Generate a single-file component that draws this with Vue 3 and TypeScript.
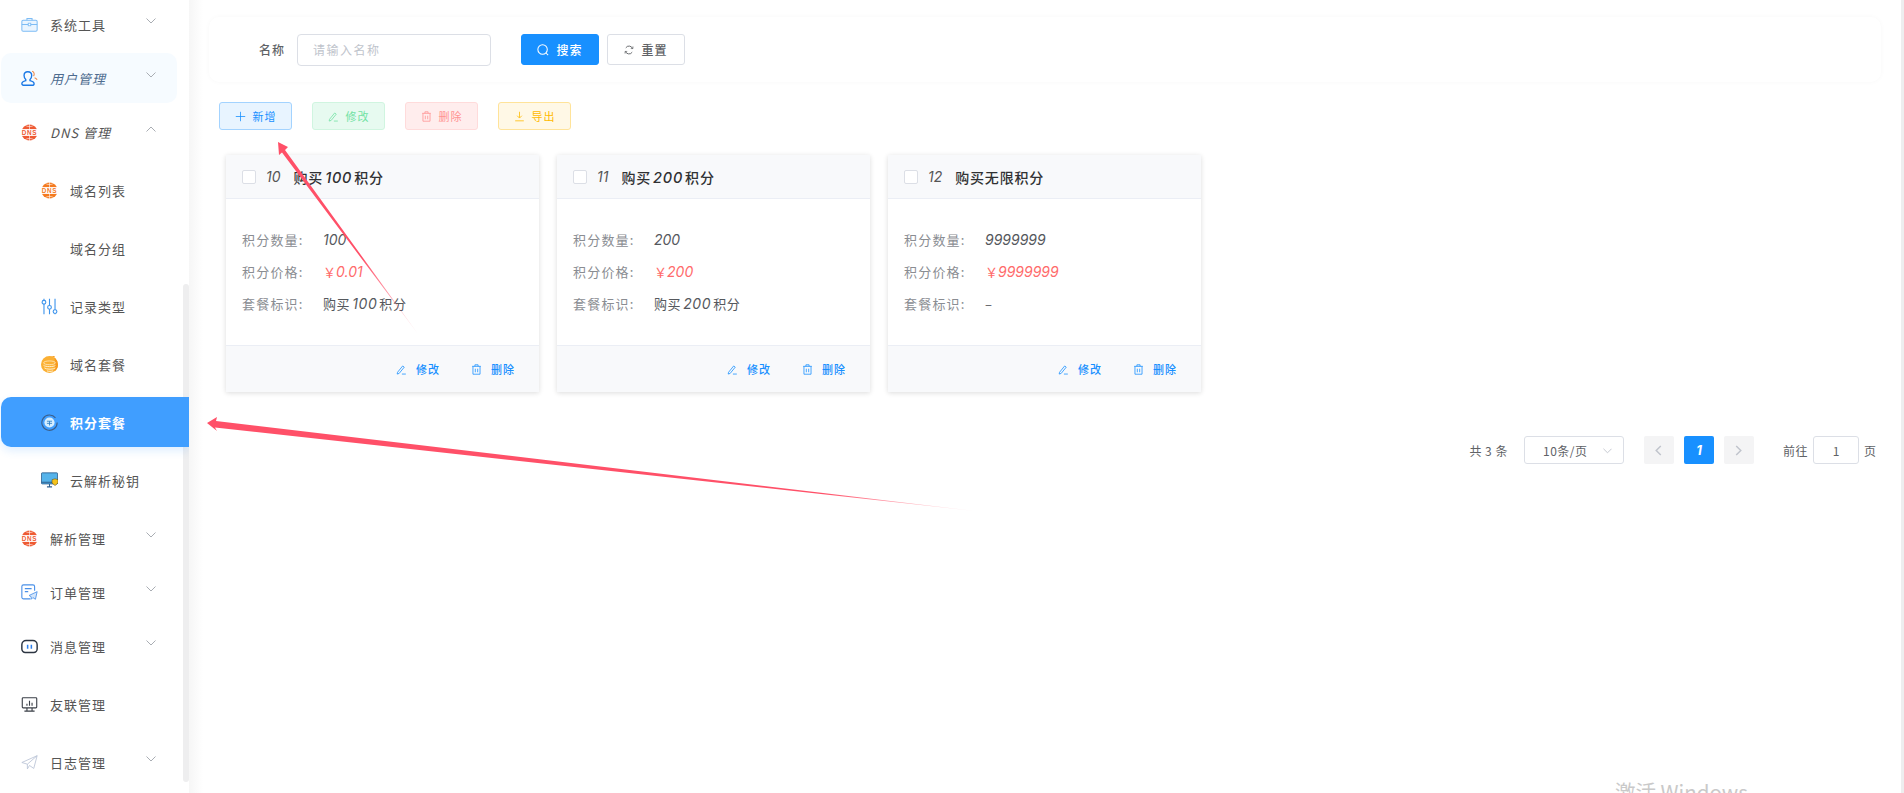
<template>
  <div class="page">
    <aside class="sidebar">
      <nav class="menu">
        <div
          v-for="item in menu"
          :key="item.label"
          class="row"
          :class="{ sub: item.sub, title: item.arrow, hover: item.hover, active: item.active, slant: item.slant }"
        >
          <svg class="icon" viewBox="0 0 20 20">
            <template v-if="item.icon === 'box'">
              <rect x="1" y="5" width="18" height="13" rx="1.5" fill="#eaf5ff" stroke="#7dbcf5" stroke-width="1.2" />
              <path d="M7 5V3h6v2M1 10h18" fill="none" stroke="#7dbcf5" stroke-width="1.2" />
              <rect x="8.5" y="8.5" width="3" height="3" fill="#fff" stroke="#7dbcf5" />
            </template>
            <template v-else-if="item.icon === 'user'">
              <path d="M8 2c3 0 4.600 2 4.600 4.600 0 2-.8 3.600-2 4.600v1.300c2.600.6 4.800 1.700 4.800 3.600 0 1.300-1 1.900-2.400 1.900H3.600C2.200 18 1 17.400 1 16.100c0-1.900 2.200-3 4.600-3.600v-1.300c-1.200-1-2-2.600-2-4.600C3.600 4 5 2 8 2z" fill="none" stroke="#1a78e6" stroke-width="1.600" />
              <path d="M13 1.500c2.500.5 3.200 3.500 1.800 5.700M16 9c1.200.5 2.300 1.300 3 2.400" fill="none" stroke="#f08a4b" stroke-width="1.300" />
            </template>
            <template v-else-if="item.icon === 'dns'">
              <circle cx="10" cy="10" r="9.500" :fill="item.color" />
              <path d="M10 0v20M5 1.500c2 2 8 2 10 0M5 18.500c2-2 8-2 10 0" fill="none" stroke="#fff" stroke-width=".7" />
              <rect x="0" y="6" width="20" height="8" fill="#fff" />
              <text x="10" y="13" text-anchor="middle" class="dns-text" :fill="item.color">DNS</text>
            </template>
            <template v-else-if="item.icon === 'sliders'">
              <path d="M3.500 1v18M10 1v18M16.500 1v18" fill="none" stroke="#3d94ec" stroke-width="1.300" />
              <circle cx="3.500" cy="5" r="2.200" fill="#fff" stroke="#3d94ec" stroke-width="1.300" />
              <circle cx="10" cy="11" r="2.200" fill="#fff" stroke="#3d94ec" stroke-width="1.300" />
              <circle cx="16.500" cy="16" r="2.200" fill="#fff" stroke="#3d94ec" stroke-width="1.300" />
            </template>
            <template v-else-if="item.icon === 'coin'">
              <circle cx="10" cy="10" r="10" fill="#fbb034" />
              <path d="M10 0a10 10 0 0 1 10 10 10 10 0 0 1-4 8V0z" fill="#f79a1e" />
              <ellipse cx="10" cy="8" rx="7" ry="2.200" fill="#fbb034" stroke="#fff3d8" stroke-width=".8" />
              <path d="M3 11c2 2 12 2 14 0M4 14c2 2 11 2 13 0M7 17.500c2 .8 5 .8 7 0" fill="none" stroke="#fff3d8" stroke-width="1.100" />
            </template>
            <template v-else-if="item.icon === 'points'">
              <path d="M17 4.500A9 9 0 1 0 19 10" fill="none" stroke="#3c5f8a" stroke-width="1.300" />
              <circle cx="10" cy="10" r="6" fill="#d6eeff" />
              <path d="M7 8.500h6M7 11h6M10 8.500v5" fill="none" stroke="#2d7fc5" stroke-width="1" />
            </template>
            <template v-else-if="item.icon === 'monitor'">
              <rect x="0.500" y="1" width="19" height="13" rx="1" fill="#55b3ea" stroke="#2f5f8d" />
              <path d="M0.500 12h19M7 17.500h6M10 14v3.500" fill="none" stroke="#2f5f8d" stroke-width="1.200" />
              <path d="M13 9l3.500-1 3.500 1v4l-3.500 3-3.500-3z" fill="#f5c21b" stroke="#5b4a10" stroke-width=".600" />
            </template>
            <template v-else-if="item.icon === 'order'">
              <path d="M11 17.500H3a2 2 0 0 1-2-2V3a2 2 0 0 1 2-2h11a2 2 0 0 1 2 2v5" fill="none" stroke="#4a90e8" stroke-width="1.300" />
              <path d="M4.500 5.500h8M4.500 9h4" fill="none" stroke="#4a90e8" stroke-width="1.300" />
              <path d="M19 9l-2 9-3-2-2 2v-3l-2.500-1.500z" fill="#d4e6fb" stroke="#4a90e8" stroke-width="1" />
            </template>
            <template v-else-if="item.icon === 'msg'">
              <path d="M6 3h8a5 5 0 0 1 5 5v5a4 4 0 0 1-4 4H5a4 4 0 0 1-4-4V8a5 5 0 0 1 5-5z" fill="none" stroke="#2c3542" stroke-width="1.700" />
              <path d="M7.800 8v4.500M12.200 8v4.500" fill="none" stroke="#2f80ed" stroke-width="1.800" />
            </template>
            <template v-else-if="item.icon === 'chart'">
              <rect x="1.500" y="2" width="17" height="12" rx="1" fill="none" stroke="#3a3f47" stroke-width="1.300" />
              <path d="M7 14v3M13 14v3M4 17.800h12M7 11.500V9M10 11.500V5.500M13 11.500V8" fill="none" stroke="#3a3f47" stroke-width="1.300" />
            </template>
            <template v-else-if="item.icon === 'plane'">
              <path d="M1 10L19 2l-4 15-5-3.500-2.500 4V12zM19 2L7.500 12" fill="none" stroke="#b9c3d6" stroke-width="1" />
            </template>
          </svg>
          <span class="label">{{ item.label }}</span>
          <svg v-if="item.arrow" class="chev" viewBox="0 0 10 6">
            <path :d="item.open ? 'M.5 5.500L5 1l4.500 4.500' : 'M.5 .5L5 5l4.500-4.500'" fill="none" stroke="#a9adb3" stroke-width="1" />
          </svg>
        </div>
      </nav>
      <div class="thumb"></div>
    </aside>

    <main class="main">
      <section class="search-card">
        <label class="search-label">名称</label>
        <input class="search-input" placeholder="请输入名称" />
        <button class="btn primary">
          <svg class="btn-icon" viewBox="0 0 14 14"><circle cx="6.500" cy="6.500" r="5.500" fill="none" stroke="#fff" stroke-width="1.200" /><path d="M10.500 10.500L13 13" stroke="#fff" stroke-width="1.200" /></svg>
          搜索
        </button>
        <button class="btn reset">
          <svg class="reset-icon" viewBox="0 0 14 14"><path d="M12 5A5.300 5.300 0 0 0 2.500 4M2 9a5.300 5.300 0 0 0 9.500 1" fill="none" stroke="#606266" stroke-width="1.300" /><path d="M12.500 2v3h-3M1.500 12V9h3" fill="none" stroke="#606266" stroke-width="1" /></svg>
          重置
        </button>
      </section>

      <div class="toolbar">
        <button v-for="t in tools" :key="t.label" class="tool" :class="t.cls">
          <svg class="tool-icon" viewBox="0 0 14 14">
            <path :d="t.path" fill="none" stroke="currentColor" stroke-width="1" />
          </svg>
          {{ t.label }}
        </button>
      </div>

      <div class="cards">
        <article v-for="c in cards" :key="c.id" class="card">
          <header class="card-head">
            <span class="check"></span>
            <i class="card-id">{{ c.id }}</i>
            <span class="card-title">
              <template v-for="(p, n) in parts(c.name)" :key="n"><i v-if="p.num" class="num">{{ p.text }}</i><template v-else>{{ p.text }}</template></template>
            </span>
          </header>
          <div class="card-body">
            <div class="line">
              <span class="key">积分数量:</span>
              <i class="val">{{ c.count }}</i>
            </div>
            <div class="line">
              <span class="key">积分价格:</span>
              <span class="val price">￥<i>{{ c.price }}</i></span>
            </div>
            <div class="line">
              <span class="key">套餐标识:</span>
              <span class="val tag">
                <template v-for="(p, n) in parts(c.tag)" :key="n"><i v-if="p.num" class="num">{{ p.text }}</i><template v-else>{{ p.text }}</template></template>
              </span>
            </div>
          </div>
          <footer class="card-foot">
            <span class="act">
              <svg class="act-icon" viewBox="0 0 14 14"><path :d="editPath" fill="none" stroke="currentColor" stroke-width="1" /></svg>
              修改
            </span>
            <span class="act">
              <svg class="act-icon" viewBox="0 0 14 14"><path :d="trashPath" fill="none" stroke="currentColor" stroke-width="1" /></svg>
              删除
            </span>
          </footer>
        </article>
      </div>

      <div class="pager">
        <span class="total">共 3 条</span>
        <div class="size">
          <span>10条/页</span>
          <svg class="size-chev" viewBox="0 0 10 6"><path d="M.5 .5L5 5l4.500-4.500" fill="none" stroke="#c0c4cc" stroke-width="1" /></svg>
        </div>
        <button class="pg">
          <svg class="pg-chev" viewBox="0 0 7 12"><path d="M6 1L1 6l5 5" fill="none" stroke="#c0c4cc" stroke-width="1.600" /></svg>
        </button>
        <button class="pg on"><i>1</i></button>
        <button class="pg">
          <svg class="pg-chev" viewBox="0 0 7 12"><path d="M1 1l5 5-5 5" fill="none" stroke="#c0c4cc" stroke-width="1.600" /></svg>
        </button>
        <span class="goto">前往</span>
        <div class="jump">1</div>
        <span class="unit">页</span>
      </div>
    </main>

    <div class="edge"></div>

    <!-- hand drawn arrows sitting on top of the screenshot -->
    <svg class="marks" viewBox="0 0 1904 793">
      <defs>
        <linearGradient id="fadeA" gradientUnits="userSpaceOnUse" x1="278" y1="142" x2="418" y2="334">
          <stop offset="0.6" stop-color="#ff5068" />
          <stop offset="1" stop-color="#ff5068" stop-opacity="0.1" />
        </linearGradient>
        <linearGradient id="fadeB" gradientUnits="userSpaceOnUse" x1="207" y1="423" x2="975" y2="511">
          <stop offset="0.8" stop-color="#ff5068" />
          <stop offset="1" stop-color="#ff5068" stop-opacity="0.1" />
        </linearGradient>
      </defs>
      <polygon points="278,142 288,147 285,150 418,334 282,152.500 279,155" fill="url(#fadeA)" />
      <polygon points="207,423 217,417 216,421 975,511 215,427.500 217,431" fill="url(#fadeB)" />
    </svg>

    <div class="watermark">激活 Windows</div>
  </div>
</template>

<script setup lang="ts">
interface MenuItem {
  label: string
  icon: string
  color?: string
  arrow?: boolean
  open?: boolean
  sub?: boolean
  hover?: boolean
  active?: boolean
  slant?: boolean
}

const menu: MenuItem[] = [
  { label: '系统工具', icon: 'box', arrow: true },
  { label: '用户管理', icon: 'user', arrow: true, hover: true, slant: true },
  { label: 'DNS 管理', icon: 'dns', color: '#ee5a33', arrow: true, open: true, slant: true },
  { label: '域名列表', icon: 'dns', color: '#f47a1f', sub: true },
  { label: '域名分组', icon: 'none', sub: true },
  { label: '记录类型', icon: 'sliders', sub: true },
  { label: '域名套餐', icon: 'coin', sub: true },
  { label: '积分套餐', icon: 'points', sub: true, active: true },
  { label: '云解析秘钥', icon: 'monitor', sub: true },
  { label: '解析管理', icon: 'dns', color: '#ee5a33', arrow: true },
  { label: '订单管理', icon: 'order', arrow: true },
  { label: '消息管理', icon: 'msg', arrow: true },
  { label: '友联管理', icon: 'chart' },
  { label: '日志管理', icon: 'plane', arrow: true }
]

const editPath = 'M2 10.500L8.500 2.500l2 1.500L4 12l-2.500.800zM7.500 12.800h5'
const trashPath = 'M1.500 3h11M5 3V1h4v2M2.500 3v10h9V3M5.500 6v4.500M8.500 6v4.500'

const tools = [
  { label: '新增', cls: 'blue', path: 'M7 1v12M1 7h12' },
  { label: '修改', cls: 'green', path: editPath },
  { label: '删除', cls: 'red', path: trashPath },
  { label: '导出', cls: 'yellow', path: 'M7 1v7.500M4 6l3 3 3-3M1.500 12.500h11' }
]

const cards = [
  { id: 10, name: '购买100积分', count: '100', price: '0.01', tag: '购买100积分' },
  { id: 11, name: '购买200积分', count: '200', price: '200', tag: '购买200积分' },
  { id: 12, name: '购买无限积分', count: '9999999', price: '9999999', tag: '–' }
]

// digits get the italic latin face, chinese stays upright
function parts(s: string) {
  return s.split(/(\d+)/).filter(Boolean).map((text) => ({ text, num: /\d/.test(text) }))
}
</script>

<style>
html,
body {
  margin: 0;
  background: #fff;
  overflow: hidden;
}
</style>

<style scoped>
.page {
  position: relative;
  display: flex;
  width: 1904px;
  height: 793px;
  overflow: hidden;
  font-family: "Noto Sans CJK SC", "Noto Sans", sans-serif;
  color: #606266;
}

.sidebar {
  position: relative;
  flex: 0 0 189px;
  height: 793px;
  overflow: hidden;
  background: #fff;
}

.menu {
  margin-top: -1px;
}

.row {
  display: flex;
  align-items: center;
  position: relative;
  height: 50px;
  margin: 8px 0;
  padding-left: 21px;
  box-sizing: border-box;
  font-size: 13px;
  letter-spacing: 1px;
  color: #555;
}

.row.title {
  margin: 0 0 4px;
}

.row.sub {
  padding-left: 41px;
}

.row.slant .label {
  font-style: italic;
}

.row.hover {
  width: 176px;
  margin-left: 1px;
  padding-left: 20px;
  background: #f6fbff;
  border-radius: 10px;
  color: #4d6b8f;
}

.row.active {
  z-index: 1;
  margin-left: 1px;
  padding-left: 40px;
  background: #409eff;
  border-radius: 10px 0 0 10px;
  box-shadow: 0 4px 8px rgba(64, 158, 255, 0.16);
  color: #fff;
  font-weight: 700;
}

.icon {
  flex: 0 0 17px;
  width: 17px;
  height: 17px;
  margin-right: 12px;
}

.dns-text {
  font-family: "Liberation Sans", sans-serif;
  font-size: 7.500px;
  font-weight: 700;
  letter-spacing: 0.800px;
}

.chev {
  position: absolute;
  left: 146px;
  top: 19px;
  width: 10px;
  height: 6px;
}

.row.hover .chev {
  left: 145px;
}

.thumb {
  position: absolute;
  left: 183px;
  top: 284px;
  width: 6px;
  height: 498px;
  border-radius: 3px;
  background: #eeeeef;
}

.main {
  flex: 1;
  padding: 17px 20px 0;
  box-sizing: border-box;
  background: linear-gradient(to right, #f6f6f6, #fff 14px);
}

.edge {
  flex: 0 0 3px;
  background: #eeeeef;
}

.search-card {
  display: flex;
  align-items: center;
  height: 65px;
  padding-left: 50px;
  box-sizing: border-box;
  border-radius: 10px;
  background: #fff;
  box-shadow: 0 0 5px rgba(0, 0, 0, 0.03);
}

.search-label {
  width: 26px;
  margin-right: 12px;
  font-size: 12px;
  letter-spacing: 1px;
  font-weight: 500;
  white-space: nowrap;
}

.search-input {
  width: 194px;
  height: 32px;
  padding: 0 15px;
  box-sizing: border-box;
  border: 1px solid #dcdfe6;
  border-radius: 4px;
  outline: none;
  font: 12px "Noto Sans CJK SC", sans-serif;
  letter-spacing: 1.500px;
}

.search-input::placeholder {
  color: #c0c4cc;
}

.btn {
  display: flex;
  align-items: center;
  justify-content: center;
  gap: 5px;
  width: 78px;
  height: 31px;
  padding: 0;
  border-radius: 3px;
  font: 500 12px "Noto Sans CJK SC", sans-serif;
  letter-spacing: 1px;
}

.btn.primary {
  margin-left: 30px;
  border: 1px solid #1890ff;
  background: #1890ff;
  color: #fff;
}

.btn.reset {
  margin-left: 8px;
  border: 1px solid #dcdfe6;
  background: #fff;
  color: #606266;
}

.btn-icon {
  width: 12px;
  height: 12px;
  margin-right: 2px;
}

.reset-icon {
  width: 10px;
  height: 10px;
  margin-right: 2px;
}

.toolbar {
  display: flex;
  gap: 20px;
  margin-top: 20px;
  padding-left: 10px;
}

.tool {
  display: flex;
  align-items: center;
  justify-content: center;
  gap: 7px;
  width: 73px;
  height: 28px;
  padding: 0;
  border-radius: 3px;
  border: 1px solid;
  font: 11px "Noto Sans CJK SC", sans-serif;
  letter-spacing: 1px;
}

.tool-icon {
  width: 11px;
  height: 11px;
}

.tool.blue {
  background: #e8f4ff;
  border-color: #a3d3ff;
  color: #1890ff;
}

.tool.green {
  background: #e7faf0;
  border-color: #d0f5e0;
  color: #71e2a3;
}

.tool.red {
  background: #ffeded;
  border-color: #ffdbdb;
  color: #ff9292;
}

.tool.yellow {
  background: #fff8e6;
  border-color: #ffe399;
  color: #ffba00;
}

.cards {
  display: flex;
  gap: 18px;
  margin-top: 25px;
  padding-left: 17px;
}

.card {
  display: flex;
  flex-direction: column;
  width: 313px;
  height: 237px;
  background: #fff;
  box-shadow: 0 1px 5px rgba(0, 0, 0, 0.14);
}

.card-head {
  display: flex;
  align-items: center;
  flex: 0 0 44px;
  padding-left: 16px;
  background: #f8f9fb;
  border-bottom: 1px solid #ebeef5;
  box-sizing: border-box;
  font-size: 14px;
  color: #303133;
}

.check {
  width: 14px;
  height: 14px;
  box-sizing: border-box;
  border: 1px solid #dcdfe6;
  border-radius: 2px;
  background: #fff;
}

.card-id {
  margin: 0 13px 0 10px;
  font-family: Inter, sans-serif;
  font-size: 14px;
  color: #555;
}

.card-title {
  font-weight: 500;
  letter-spacing: 0.800px;
}

.num {
  margin: 0 2px;
  font-family: Inter, sans-serif;
  font-size: 14.500px;
}

.card-body {
  flex: 1;
  padding: 24px 16px 0;
}

.line {
  display: flex;
  align-items: center;
  height: 32px;
  font-size: 13px;
}

.key {
  width: 81px;
  color: #8a8d92;
  letter-spacing: 1.200px;
  white-space: nowrap;
}

.val {
  color: #55585d;
  font-family: "Noto Sans CJK SC", sans-serif;
}

.val.tag {
  letter-spacing: 0.600px;
}

i.val,
.val i {
  font-family: Inter, sans-serif;
  font-size: 14px;
}

.val.price {
  color: #ff6b6b;
}

.card-foot {
  display: flex;
  align-items: center;
  justify-content: flex-end;
  gap: 31px;
  flex: 0 0 47px;
  padding-right: 24px;
  box-sizing: border-box;
  background: #f8f9fb;
  border-top: 1px solid #ebeef5;
  font-size: 11px;
  font-weight: 500;
  letter-spacing: 1px;
  color: #1890ff;
}

.act {
  display: flex;
  align-items: center;
  gap: 9px;
}

.act-icon {
  width: 11px;
  height: 11px;
}

.pager {
  display: flex;
  align-items: center;
  justify-content: flex-end;
  height: 28px;
  margin-top: 44px;
  padding-right: 5px;
  font-size: 12px;
  color: #606266;
}

.total {
  margin-right: 16px;
  letter-spacing: 0.500px;
}

.size {
  position: relative;
  display: flex;
  align-items: center;
  width: 100px;
  height: 28px;
  padding-left: 18px;
  box-sizing: border-box;
  border: 1px solid #dcdfe6;
  border-radius: 3px;
  letter-spacing: 0.500px;
}

.size-chev {
  position: absolute;
  right: 11px;
  top: 11px;
  width: 9px;
  height: 6px;
}

.pg {
  display: flex;
  align-items: center;
  justify-content: center;
  width: 30px;
  height: 28px;
  margin-left: 10px;
  padding: 0;
  border: 0;
  border-radius: 2px;
  background: #f4f4f5;
}

.pg:first-of-type {
  margin-left: 20px;
}

.pg.on {
  background: #1890ff;
  color: #fff;
  font: 700 13px Inter, sans-serif;
}

.pg-chev {
  width: 7px;
  height: 11px;
}

.goto {
  margin-left: 29px;
  letter-spacing: 0.500px;
}

.jump {
  display: flex;
  align-items: center;
  justify-content: center;
  width: 46px;
  height: 28px;
  margin-left: 5px;
  box-sizing: border-box;
  border: 1px solid #dcdfe6;
  border-radius: 3px;
}

.unit {
  margin-left: 5px;
}

.marks {
  position: absolute;
  left: 0;
  top: 0;
  width: 1904px;
  height: 793px;
  pointer-events: none;
}

.watermark {
  position: absolute;
  left: 1615px;
  top: 776px;
  font-size: 20.500px;
  line-height: 30px;
  color: #c9c9c9;
  white-space: nowrap;
}
</style>
